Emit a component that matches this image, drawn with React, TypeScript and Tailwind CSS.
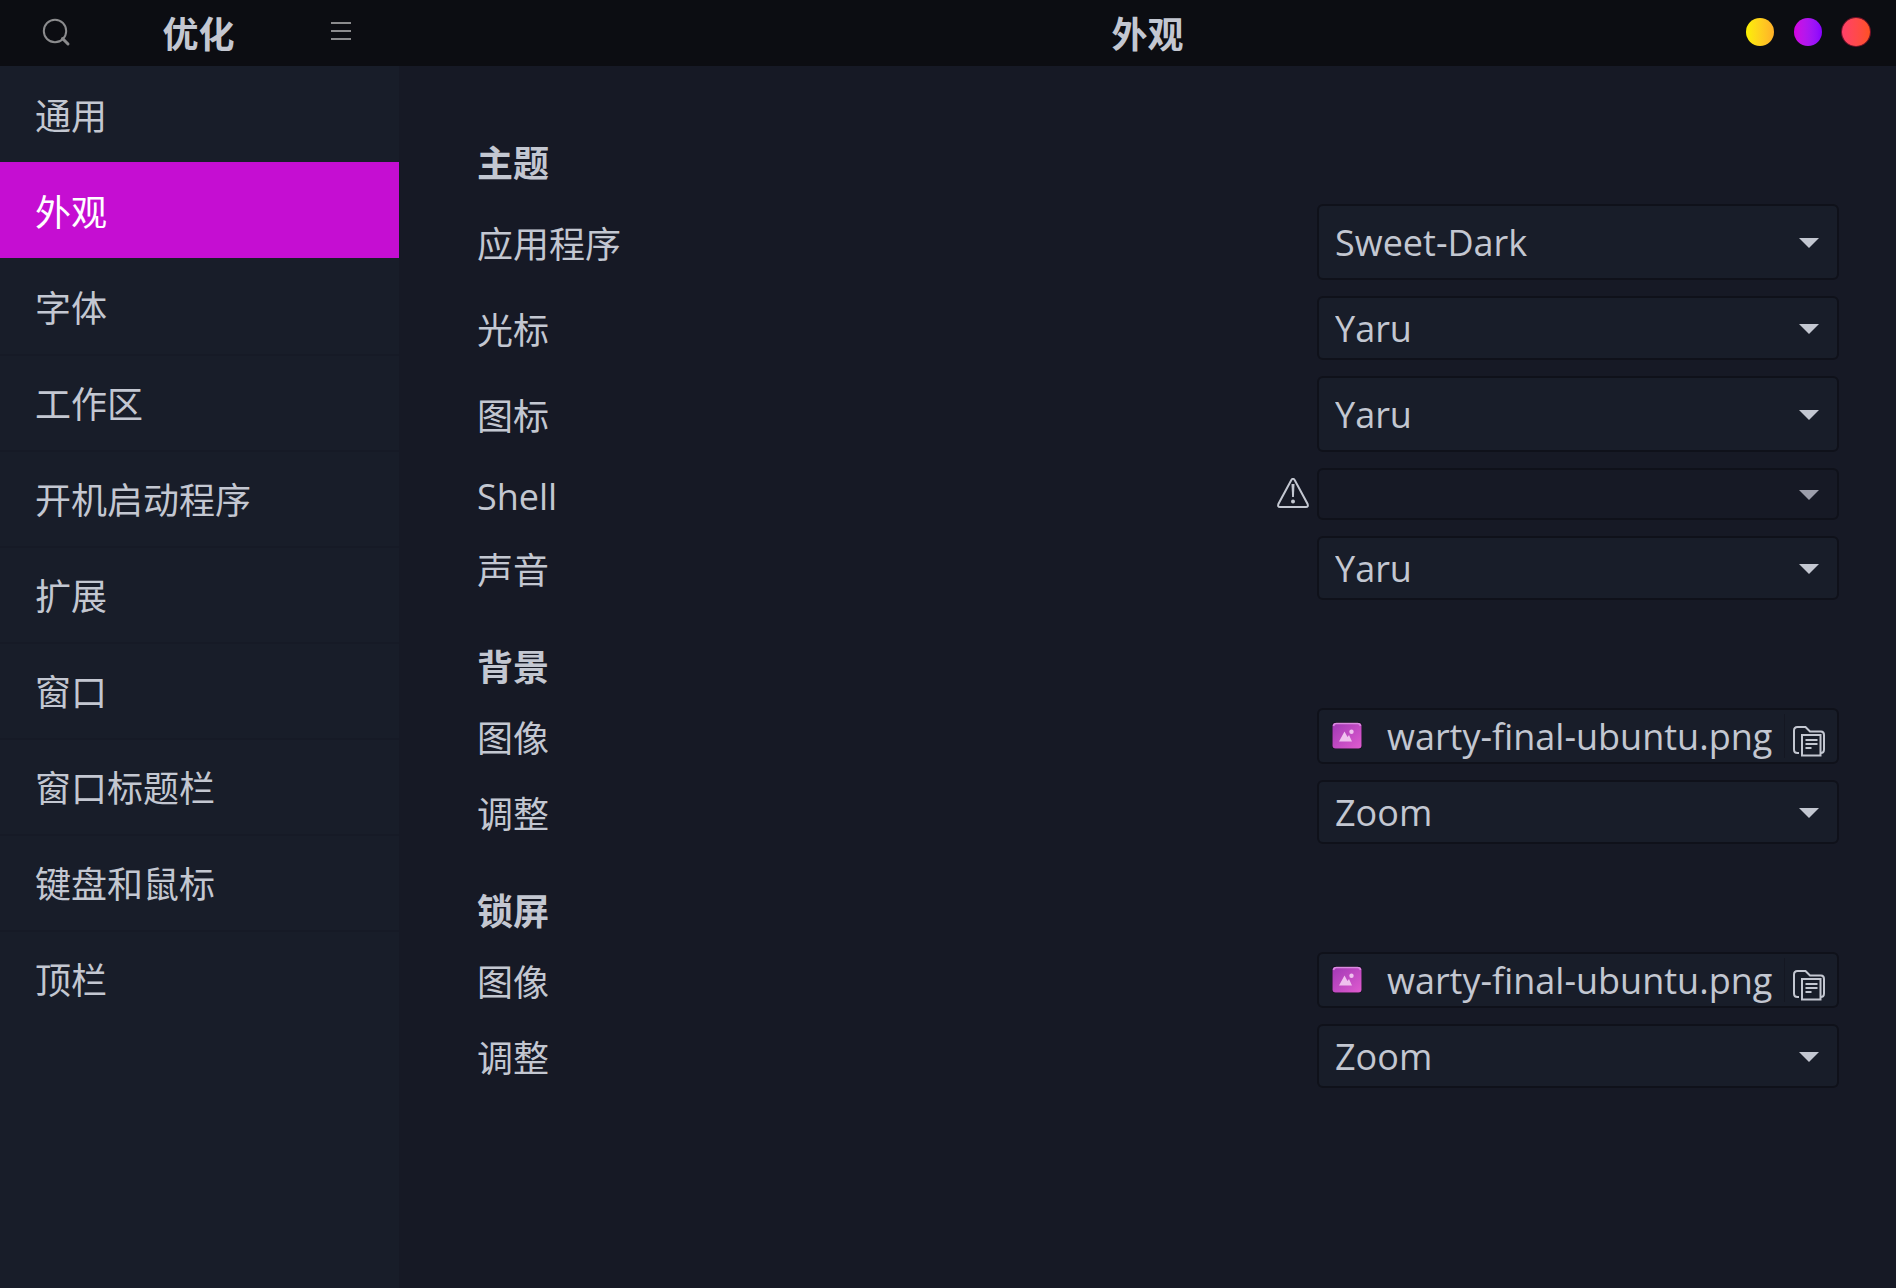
import React from "react";

const FONT = "font-['Open_Sans','Noto_Sans_CJK_SC',sans-serif]";

const NAV = ["通用", "外观", "字体", "工作区", "开机启动程序", "扩展", "窗口", "窗口标题栏", "键盘和鼠标", "顶栏"];

type Size = "tall" | "normal" | "short";

const HEIGHTS: Record<Size, string> = {
  tall: "h-19",
  normal: "h-16",
  short: "h-13",
};

function SearchIcon() {
  return (
    <svg className="size-8" viewBox="0 0 32 32" fill="none" stroke="#8b8b8d" strokeWidth="2">
      <circle cx="15" cy="14" r="11.2" />
      <path d="M22.5 21.5 28 27" strokeWidth="3" strokeLinecap="round" />
    </svg>
  );
}

function MenuIcon() {
  return (
    <svg className="size-8" viewBox="0 0 32 32" stroke="#8b8b8d" strokeWidth="2">
      <path d="M6 6h20M6 14h20M6 22h20" />
    </svg>
  );
}

function WarningIcon() {
  return (
    <svg className="size-8" viewBox="0 0 32 32" fill="none" stroke="#c3c7d1" strokeWidth="2">
      <path d="M14.2 2.2Q16 -.8 17.8 2.2L30.6 26Q31.6 29 29 29H3Q.4 29 1.4 26Z" />
      <path d="M14.5 6h3l-.6 13h-1.8z" fill="#c3c7d1" stroke="none" />
      <circle cx="16" cy="23.5" r="2" fill="#c3c7d1" stroke="none" />
    </svg>
  );
}

function PictureIcon() {
  return (
    <svg className="size-8 shrink-0" viewBox="0 0 32 32">
      <defs>
        <linearGradient id="pic" x1="0" y1="0" x2="1" y2="1">
          <stop offset="0" stopColor="#a038b4" />
          <stop offset="1" stopColor="#e05cd0" />
        </linearGradient>
      </defs>
      <rect x="1" y="2" width="30" height="27" rx="3.5" fill="#10101a" />
      <rect x="1.500" y="3" width="29" height="25.500" rx="3" fill="url(#pic)" />
      <path d="M2.5 6a3 3 0 0 1 3-2.5h21a3 3 0 0 1 3 2.5" fill="none" stroke="#d98be0" strokeWidth="1.6" />
      <path d="M8 21.500 13.500 11.500 16.500 17 18 15 21 21.500z" fill="#efc0ee" />
      <circle cx="20.500" cy="11.700" r="2.2" fill="#efc0ee" />
    </svg>
  );
}

function FolderIcon() {
  return (
    <svg className="size-8" viewBox="0 0 32 32" fill="none" stroke="#c3c7d1" strokeWidth="2">
      <path d="M6 27H4.500Q1 27 1 23.500V4.500Q1 1 4.500 1H12.500L17 5.500H28Q31 5.500 31 9V23.500Q31 27 27.500 27" />
      <path d="M9 9H27.500V29.500H9Z" />
      <path d="M12.500 14H24.500M12.500 18H24.500M12.500 22H18.500" />
    </svg>
  );
}

function Caret({ dim }: { dim?: boolean }) {
  return (
    <svg
      className="pointer-events-none absolute top-1/2 right-5 h-3 w-5 -translate-y-1/2"
      viewBox="0 0 20 12"
      fill={dim ? "#9c9eab" : "#c3c7d1"}
    >
      <path d="M0 2H20L10 12Z" />
    </svg>
  );
}

function Row({ id, label, children }: { id: string; label: string; children: React.ReactNode }) {
  return (
    <div className="flex items-center justify-between">
      <label htmlFor={id} className="pt-1.5 leading-11">
        {label}
      </label>
      <div className="flex items-center gap-2">{children}</div>
    </div>
  );
}

function SelectBox({ id, value, size = "normal", disabled }: { id: string; value: string; size?: Size; disabled?: boolean }) {
  return (
    <div className="relative w-[522px]">
      <select
        id={id}
        disabled={disabled}
        defaultValue={value}
        className={`${HEIGHTS[size]} block w-full appearance-none rounded-md border-2 border-[#0f111a] pt-0.5 pl-4 text-[#c3c7d1] opacity-100 ${
          disabled ? "bg-[#161925]" : "bg-[#181d29]"
        }`}
      >
        <option value={value}>{value}</option>
      </select>
      <Caret dim={disabled} />
    </div>
  );
}

function FileBox({ id }: { id: string }) {
  return (
    <button
      id={id}
      className="flex h-14 w-[522px] items-center rounded-md border-2 border-[#0f111a] bg-[#181d29] pr-3 pl-3 text-left"
    >
      <PictureIcon />
      <span className="ml-6 flex-1 pt-0.5 whitespace-nowrap">warty-final-ubuntu.png</span>
      <span className="flex h-11 items-center border-l border-[#141722] pt-3 pl-2">
        <FolderIcon />
      </span>
    </button>
  );
}

function Section({ title, children }: { title: string; children: React.ReactNode }) {
  return (
    <section className="flex flex-col gap-4">
      <h2 className="h-11 leading-10 font-bold">{title}</h2>
      {children}
    </section>
  );
}

export default function App() {
  return (
    <div className={`${FONT} flex min-h-screen flex-col bg-[#161925] text-[36px] text-[#c3c7d1]`}>
      <header className="flex h-16.5 items-center bg-[#0c0d12]">
        <div className="flex w-[399px] items-center justify-between pr-10.5 pl-10">
          <button aria-label="搜索">
            <SearchIcon />
          </button>
          <h1 className="pt-1 leading-15 font-bold">优化</h1>
          <button aria-label="菜单">
            <MenuIcon />
          </button>
        </div>
        <div className="grid flex-1 grid-cols-[1fr_auto_1fr] items-center">
          <h1 className="col-start-2 pt-1 leading-15 font-bold">外观</h1>
          <div className="flex gap-5 justify-self-end pr-6.5 pb-0.5">
            <button aria-label="最小化" className="size-7 rounded-full bg-linear-to-r from-[#fbf000] to-[#ffb028]" />
            <button aria-label="最大化" className="size-7 rounded-full bg-linear-to-r from-[#d400e0] to-[#8800ff]" />
            <button
              aria-label="关闭"
              className="size-7 rounded-full bg-linear-to-r from-[#ff4068] to-[#ff5020] ring-1 ring-[#c01038]/60"
            />
          </div>
        </div>
      </header>
      <div className="flex flex-1">
        <nav className="w-[399px] shrink-0 bg-[#181d29]">
          {NAV.map((name) => (
            <a
              key={name}
              href="#"
              className={
                name === "外观"
                  ? "flex h-24 items-center border-t-2 border-[#c50ed2] bg-[#c50ed2] pt-1 pl-[35px] text-white"
                  : "flex h-24 items-center border-t-2 border-[#161a26] pt-1 pl-[35px] first:border-transparent nth-3:border-transparent"
              }
            >
              {name}
            </a>
          ))}
        </nav>
        <main className="flex flex-1 flex-col gap-12 pt-[78px] pr-[57px] pl-[78px]">
          <Section title="主题">
            <Row id="app" label="应用程序">
              <SelectBox id="app" value="Sweet-Dark" size="tall" />
            </Row>
            <Row id="cursor" label="光标">
              <SelectBox id="cursor" value="Yaru" />
            </Row>
            <Row id="icons" label="图标">
              <SelectBox id="icons" value="Yaru" size="tall" />
            </Row>
            <Row id="shell" label="Shell">
              <WarningIcon />
              <SelectBox id="shell" value="" size="short" disabled />
            </Row>
            <Row id="sound" label="声音">
              <SelectBox id="sound" value="Yaru" />
            </Row>
          </Section>
          <Section title="背景">
            <Row id="bg-image" label="图像">
              <FileBox id="bg-image" />
            </Row>
            <Row id="bg-adjust" label="调整">
              <SelectBox id="bg-adjust" value="Zoom" />
            </Row>
          </Section>
          <Section title="锁屏">
            <Row id="lock-image" label="图像">
              <FileBox id="lock-image" />
            </Row>
            <Row id="lock-adjust" label="调整">
              <SelectBox id="lock-adjust" value="Zoom" />
            </Row>
          </Section>
        </main>
      </div>
    </div>
  );
}
